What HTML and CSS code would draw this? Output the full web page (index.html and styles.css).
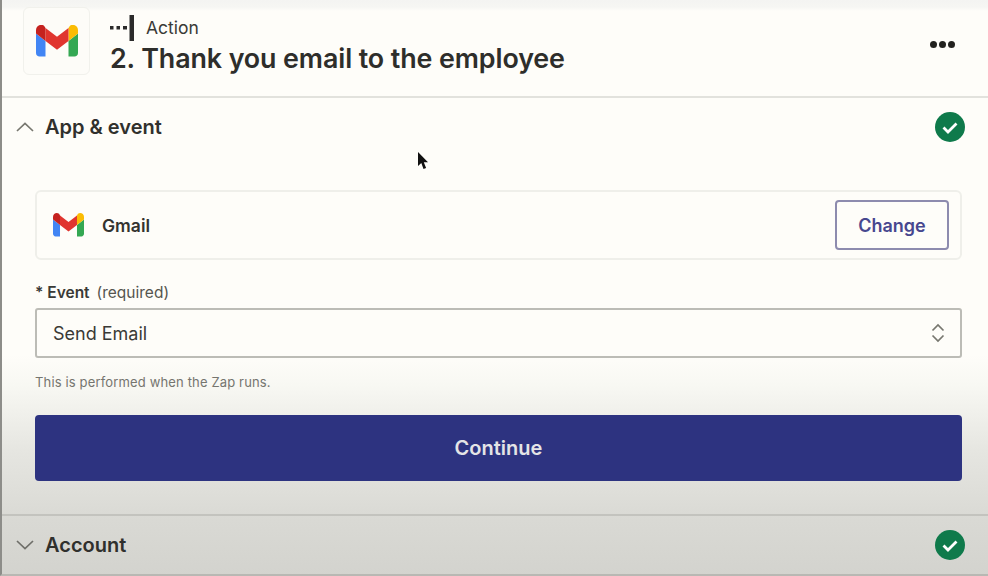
FILE: index.html
```html
<!DOCTYPE html>
<html lang="en">
<head>
<meta charset="utf-8">
<title>Thank you email to the employee</title>
<link rel="stylesheet" href="styles.css">
</head>
<body>
<svg class="defs" width="0" height="0" aria-hidden="true">
  <defs>
    <symbol id="gmail" viewBox="0 0 42 32">
      <path d="M3.5 31.5h6V16L0 8.5V28c0 2 1.500 3.500 3.500 3.500z" fill="#4285f4"/>
      <path d="M32.500 31.500h6c2 0 3.500-1.500 3.500-3.500V8.500L32.500 16z" fill="#34a853"/>
      <path d="M32.500 3v13L42 8.500V5c0-4.300-4.900-6.700-8.200-4.100z" fill="#fbbc04"/>
      <path d="M9.500 16V3L21 11.800 32.500 3v13L21 24.800z" fill="#e0352f"/>
      <path d="M0 5v3.500L9.500 16V3L8.200.9C4.900-1.700 0 .7 0 5z" fill="#c5221f"/>
    </symbol>
    <symbol id="check" viewBox="0 0 30 30">
      <circle cx="15" cy="15" r="15" fill="#0f7a4b"/>
      <path d="M8.500 15.500l4.500 4.500 8.500-8.500" fill="none" stroke="#fff" stroke-width="2.800"/>
    </symbol>
  </defs>
</svg>
<main class="panel">
  <header class="head">
    <div class="app-tile"><svg class="gmail-lg"><use href="#gmail"/></svg></div>
    <div class="head-text">
      <div class="kind">
        <svg class="kind-icon" viewBox="0 0 24 26"><path d="M0 11h3.500v3.500H0zM6.500 11H10v3.500H6.500zM13 11h4v3.500h-4z" fill="#2b2b2b"/><path d="M19.500 0H24v26h-4.500z" fill="#2b2b2b"/></svg>
        <span>Action</span>
      </div>
      <h1 class="title">2. Thank you email to the employee</h1>
    </div>
    <div class="dots" aria-label="More"><i></i><i></i><i></i></div>
  </header>

  <section class="section">
    <div class="sec-head">
      <svg class="chev" viewBox="0 0 18 10"><path d="M1 9l8-7.500L17 9" fill="none" stroke="#77776f" stroke-width="1.700"/></svg>
      <h2 class="sec-title">App &amp; event</h2>
      <svg class="ok"><use href="#check"/></svg>
    </div>
    <div class="sec-body">
      <div class="app-row">
        <svg class="gmail-sm"><use href="#gmail"/></svg>
        <span class="app-name">Gmail</span>
        <button class="change" type="button">Change</button>
      </div>
      <div class="label"><b>* Event</b><span>(required)</span></div>
      <div class="select">
        <span>Send Email</span>
        <svg class="updown" viewBox="0 0 14 20"><path d="M1.500 7.500L7 2l5.500 5.500M1.500 12.500L7 18l5.500-5.500" fill="none" stroke="#77776f" stroke-width="1.700"/></svg>
      </div>
      <p class="hint">This is performed when the Zap runs.</p>
      <button class="continue" type="button">Continue</button>
    </div>
  </section>

  <section class="section account">
    <div class="sec-head">
      <svg class="chev" viewBox="0 0 18 10"><path d="M1 1l8 7.500L17 1" fill="none" stroke="#6f6f69" stroke-width="1.700"/></svg>
      <h2 class="sec-title">Account</h2>
      <svg class="ok"><use href="#check"/></svg>
    </div>
  </section>
</main>
<svg class="cursor" viewBox="0 0 12 20" aria-hidden="true"><path d="M1 1v14l3.300-3 2.200 6 2.600-1-2.300-5.700H11z" fill="#111"/></svg>
</body>
</html>
```

FILE: styles.css
```css
* { box-sizing: border-box; }
html, body { margin: 0; height: 100%; overflow: hidden; }
body {
  position: relative;
  font-family: Inter, "Liberation Sans", sans-serif;
  color: #2d2d2a;
  background: linear-gradient(180deg, #f4f4f2 0, #f6f6f3 7px, #fefdf9 11px, #fefdf9 355px, #f8f8f3 385px, #e6e6e1 450px, #d9d9d4 520px, #d3d3ce 576px);
}
.defs { position: absolute; }
.panel { height: 576px; border-left: 2px solid #8d8d89; border-bottom: 2px solid #b8b8b3; }

.head { height: 98px; padding: 7px 33px 0 21px; display: flex; align-items: flex-start; border-bottom: 2px solid #e2e2dd; }
.app-tile {
  width: 67px; height: 68px; margin-right: 20px;
  display: flex; align-items: center; justify-content: center;
  background: #fdfcf8; border: 1px solid #f1f1ec; border-radius: 6px;
}
.gmail-lg { width: 42px; height: 32px; }
.head-text { flex: 1; padding-top: 8px; }
.kind { display: flex; align-items: center; height: 26px; font-size: 17.500px; line-height: 26px; color: #3a3a37; }
.kind-icon { width: 24px; height: 26px; margin-right: 12px; }
.title { margin: 1px 0 0; font-size: 26.850px; line-height: 32px; font-weight: 600; color: #2e2e2b; letter-spacing: -0.1px; }
.dots { display: flex; gap: 2px; margin-top: 34px; }
.dots i { width: 7px; height: 7px; border-radius: 50%; background: #22221f; }

.section { padding: 0 23px 0 14px; }
.sec-head { display: flex; align-items: center; height: 58px; }
.chev { width: 18px; height: 10px; margin-right: 11px; flex: none; }
.sec-title { flex: 1; margin: 0; font-size: 20px; line-height: 28px; font-weight: 600; color: #30302d; }
.ok { width: 30px; height: 30px; }

.sec-body { padding: 34px 3px 0 19px; }
.app-row {
  display: flex; align-items: center; height: 70px; padding: 0 11px 0 16px;
  border: 2px solid #efefea; border-radius: 6px;
}
.gmail-sm { width: 31px; height: 24px; margin-right: 18px; }
.app-name { flex: 1; font-size: 17.500px; font-weight: 600; color: #33332f; }
.change {
  width: 114px; height: 50px; padding: 0;
  font: 600 18px Inter, "Liberation Sans", sans-serif; color: #47478f;
  background: transparent; border: 2px solid #8d8bae; border-radius: 4px;
}
.label { margin-top: 23px; height: 20px; font-size: 15.500px; line-height: 20px; color: #55554f; display: flex; gap: 7px; }
.label b { font-weight: 600; color: #3a3a36; }
.select {
  display: flex; align-items: center; justify-content: space-between;
  height: 50px; margin-top: 5px; padding: 0 15px 0 16px;
  font-size: 18px; color: #3a3a36;
  border: 2px solid #bcbcb6; border-radius: 3px;
}
.updown { width: 14px; height: 20px; }
.hint { margin: 16px 0 0; font-size: 13px; line-height: 16px; color: #75756f; letter-spacing: 0.15px; }
.continue {
  display: block; width: 100%; height: 66px; margin-top: 25px; padding: 0;
  font: 600 20px Inter, "Liberation Sans", sans-serif; color: #e4e4e6;
  background: #2d3380; border: 0; border-radius: 4px;
}
.account { margin-top: 33px; border-top: 2px solid #c3c3be; }

.cursor { position: absolute; left: 417px; top: 151px; width: 12px; height: 20px; }
```
